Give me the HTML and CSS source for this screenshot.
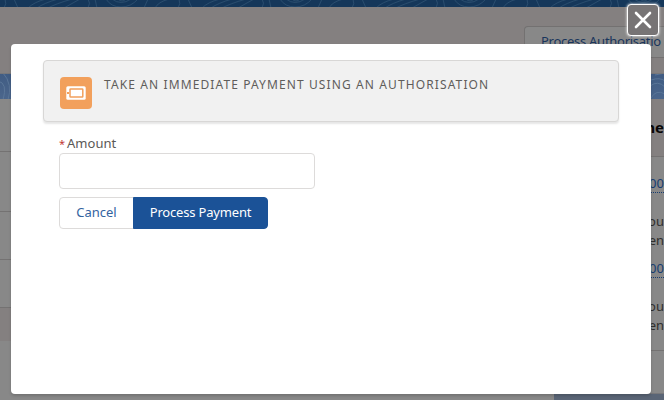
FILE: index.html
```html
<!DOCTYPE html>
<html lang="en">
<head>
<meta charset="utf-8">
<title>Process Payment</title>
<link rel="stylesheet" href="styles.css">
</head>
<body>
<div class="page">
  <div class="brand">
    <svg width="664" height="7" viewBox="0 0 664 7" aria-hidden="true">
      <defs>
        <pattern id="contours" width="174" height="7" patternUnits="userSpaceOnUse">
          <path d="M5-1Q7 4 4 8M14-1L18 8M28 8Q34 2 46-1M37 8Q44 3 58-1M48 8Q55 4 72-1M64 8L80-1M88 8Q91 3 88-1M97 8L95-1M106-1Q111 7 121 7T138-1M112-1Q121 6 131-1M118-1Q122 3 126-1M144 8L148-1M155 8Q158 2 169-1"/>
        </pattern>
      </defs>
      <rect width="664" height="7" fill="url(#contours)"/>
    </svg>
  </div>
  <div class="page-header"><div class="action">Process Authorisatio</div></div>
  <div class="band">
    <svg width="664" height="25" viewBox="0 0 664 25" aria-hidden="true">
      <path d="M-2 7Q8 9 3 26M3-1Q13 10 8 26M651 6Q660 3 665 7M650 12Q658 6 665 13M651 24Q656 15 665 20M655 1L665-1"/>
    </svg>
  </div>
  <div class="columns">
    <div class="main-column">
      <div class="row tall"></div>
      <div class="row medium"></div>
      <div class="row"></div>
      <div class="row"></div>
      <div class="section"></div>
    </div>
    <div class="side-card">
      <div class="side-title">Payme</div>
      <div class="record">
        <div class="link"><span>0000</span></div>
        <div class="field">Amou</div>
        <div class="field">Payen</div>
      </div>
      <div class="record second">
        <div class="link"><span>0000</span></div>
        <div class="field">Amou</div>
        <div class="field">Payen</div>
      </div>
    </div>
  </div>
</div>
<button class="close" aria-label="Close">
  <svg width="18" height="18" viewBox="0 0 18 18"><path d="M2 2L16 16M16 2L2 16"/></svg>
</button>
<div class="modal">
  <div class="title-card">
    <div class="icon">
      <svg width="32" height="32" viewBox="0 0 32 32" aria-hidden="true">
        <rect x="6.3" y="9.2" width="19.4" height="13.6" rx="1.6" fill="#fff"/>
        <rect x="10" y="12" width="12.8" height="8" rx=".6" fill="none" stroke="#f2a05c" stroke-width="1.5"/>
        <path d="M7 16h2" fill="none" stroke="#f2a05c" stroke-width="1.8"/>
      </svg>
    </div>
    <h1>TAKE AN IMMEDIATE PAYMENT USING AN AUTHORISATION</h1>
  </div>
  <div class="form">
    <label for="amount"><span class="required">*</span>Amount</label>
    <input id="amount" type="text">
    <div class="buttons">
      <button class="cancel">Cancel</button><button class="submit">Process Payment</button>
    </div>
  </div>
</div>
</body>
</html>
```

FILE: styles.css
```css
* { box-sizing: border-box; }
body {
  position: relative;
  width: 664px;
  height: 400px;
  margin: 0;
  overflow: hidden;
  font-family: "Noto Sans", "Open Sans", sans-serif;
  font-size: 13px;
}
svg { display: block; }
.page { display: flex; flex-direction: column; height: 400px; background: #5a6576; }
.brand { height: 7px; background: #15375a; flex: none; }
.brand path { fill: none; stroke: #294c6d; stroke-width: 1; }
.page-header {
  flex: none;
  display: flex;
  justify-content: flex-end;
  height: 67px;
  padding-top: 19px;
  overflow: hidden;
  background: #848080;
  border-bottom: 1px solid #77777a;
}
.action {
  flex: none;
  width: 140px;
  height: 32px;
  padding-left: 16px;
  border: 1px solid #737171;
  border-right: 0;
  border-radius: 4px 0 0 4px;
  background: #888;
  color: #19355c;
  line-height: 29px;
  letter-spacing: -0.27px;
  white-space: nowrap;
}
.band { flex: none; height: 25px; background: linear-gradient(#405c83, #4b668c); }
.band path { fill: none; stroke: #5a7698; }
.columns { display: flex; justify-content: space-between; flex: 1; }
.main-column { width: 554px; background: #888; }
.row { height: 48px; border-bottom: 1px solid #747272; }
.row.tall { height: 53px; }
.row.medium { height: 60px; }
.section { height: 33px; background: #848080; }
.side-card {
  width: 97px;
  height: 295px;
  background: #888;
  overflow: hidden;
  border-bottom: 1px solid #77777a;
  border-radius: 0 0 0 4px;
  text-align: right;
}
.side-title {
  height: 58px;
  background: #848080;
  border-bottom: 1px solid #747272;
  color: #080707;
  font-size: 15px;
  font-weight: 700;
  line-height: 57px;
}
.record { height: 85px; padding-top: 17px; color: #302f2e; }
.record.second { height: 109px; border-bottom: 1px solid #747272; }
.link { height: 38px; color: #173d70; line-height: 19px; }
.link span { display: inline-block; height: 19px; border-bottom: 1px dotted #173d70; }
.field { height: 19px; line-height: 19px; }
.close {
  position: absolute;
  top: 4px;
  left: 627px;
  display: grid;
  place-items: center;
  width: 32px;
  height: 32px;
  padding: 0;
  border: 1px solid #fff;
  border-radius: 4px;
  background: #777475;
  box-shadow: 0 0 3px #fff;
}
.close path { fill: none; stroke: #fff; stroke-width: 2.6; stroke-linecap: round; }
.modal {
  position: absolute;
  top: 44px;
  left: 11px;
  width: 640px;
  height: 350px;
  padding: 16px 32px;
  border-radius: 4px;
  background: #fff;
  box-shadow: 0 2px 3px rgba(0, 0, 0, 0.16);
}
.title-card {
  display: flex;
  gap: 12px;
  width: 576px;
  height: 62px;
  padding: 16px;
  border: 1px solid #d8d7d6;
  border-radius: 4px;
  background: #f1f1f1;
  box-shadow: 0 2px 2px rgba(0, 0, 0, 0.1);
}
.icon { flex: none; width: 32px; height: 32px; border-radius: 4px; background: #f2a05c; }
h1 {
  margin: -1px 0 0;
  color: #5f5d5b;
  font-size: 12px;
  font-weight: 400;
  line-height: 18px;
  letter-spacing: 1.11px;
  white-space: nowrap;
}
.form { display: flex; flex-direction: column; padding: 13px 16px 0; }
label { height: 18px; color: #5a5856; line-height: 17px; letter-spacing: 0; }
.required { margin-right: 2px; color: #c23934; font-size: 11px; }
input {
  width: 256px;
  height: 36px;
  padding: 0 12px;
  border: 1px solid #dddbda;
  border-radius: 4px;
  background: #fff;
  font: inherit;
}
.buttons { display: flex; margin-top: 8px; }
.buttons button {
  height: 32px;
  padding: 0 0 2px;
  border: 1px solid #dddbda;
  font: inherit;
  line-height: 28px;
  white-space: nowrap;
}
.cancel { width: 75px; border-radius: 4px 0 0 4px; background: #fff; color: #33639f; }
.buttons .submit {
  width: 135px;
  margin-left: -1px;
  border-color: #1b5297;
  border-radius: 0 4px 4px 0;
  background: #1b5297;
  color: #fff;
  letter-spacing: -0.18px;
}
```
